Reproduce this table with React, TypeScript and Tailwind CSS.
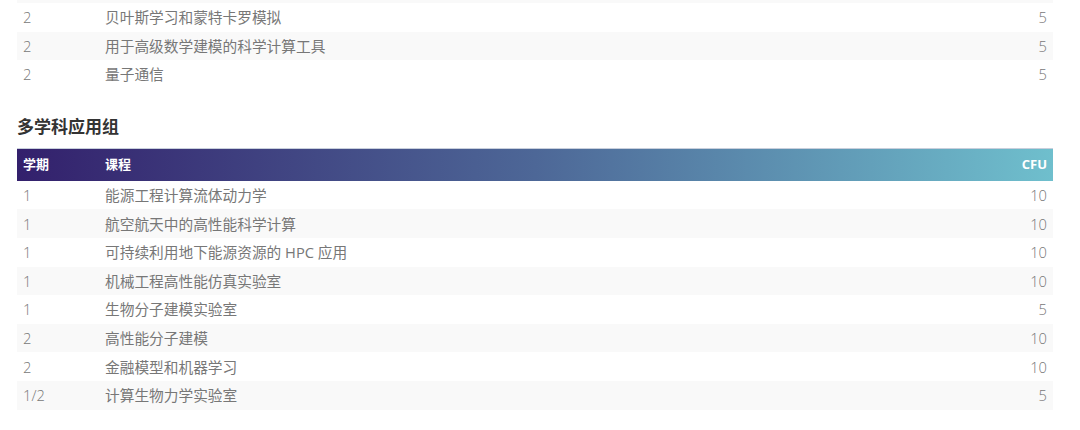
const topRows = [
  { term: '2', name: '贝叶斯学习和蒙特卡罗模拟', cfu: '5' },
  { term: '2', name: '用于高级数学建模的科学计算工具', cfu: '5' },
  { term: '2', name: '量子通信', cfu: '5' },
];

const groupRows = [
  { term: '1', name: '能源工程计算流体动力学', cfu: '10' },
  { term: '1', name: '航空航天中的高性能科学计算', cfu: '10' },
  { term: '1', name: '可持续利用地下能源资源的 HPC 应用', cfu: '10' },
  { term: '1', name: '机械工程高性能仿真实验室', cfu: '10' },
  { term: '1', name: '生物分子建模实验室', cfu: '5' },
  { term: '2', name: '高性能分子建模', cfu: '10' },
  { term: '2', name: '金融模型和机器学习', cfu: '10' },
  { term: '1/2', name: '计算生物力学实验室', cfu: '5' },
];

type Row = { term: string; name: string; cfu: string };

function Rows({ rows }: { rows: Row[] }) {
  return (
    <>
      {rows.map((r, i) => (
        <div
          key={r.name}
          className={`flex h-[28.6px] items-center text-[14.7px] text-[#777] ${i % 2 === 1 ? 'bg-[#f9f9f9]' : 'bg-white'}`}
        >
          <div className="w-[88px] pl-[6px] font-light">{r.term}</div>
          <div className="flex-1">{r.name}</div>
          <div className="pr-[6px] text-right font-light">{r.cfu}</div>
        </div>
      ))}
    </>
  );
}

export default function App() {
  return (
    <div
      className="h-[430px] w-[1080px] overflow-hidden bg-white pl-[17px] pr-[27px]"
      style={{ fontFamily: '"Open Sans", "Noto Sans CJK SC", sans-serif' }}
    >
      <div className="h-[3px] bg-[#f9f9f9]" />
      <Rows rows={topRows} />

      <h3 className="mt-[26px] mb-[9px] text-[17px] leading-[24px] font-bold text-[#333]">多学科应用组</h3>

      <div className="border-t border-[#c8cfdc] bg-[linear-gradient(to_right,#33206c,#4d6797_50%,#6fbfcd)]">
        <div className="flex h-[32px] items-center text-[13px] font-bold text-white">
          <div className="w-[88px] pl-[6px]">学期</div>
          <div className="flex-1">课程</div>
          <div className="pr-[6px] text-right">CFU</div>
        </div>
      </div>
      <Rows rows={groupRows} />
    </div>
  );
}
